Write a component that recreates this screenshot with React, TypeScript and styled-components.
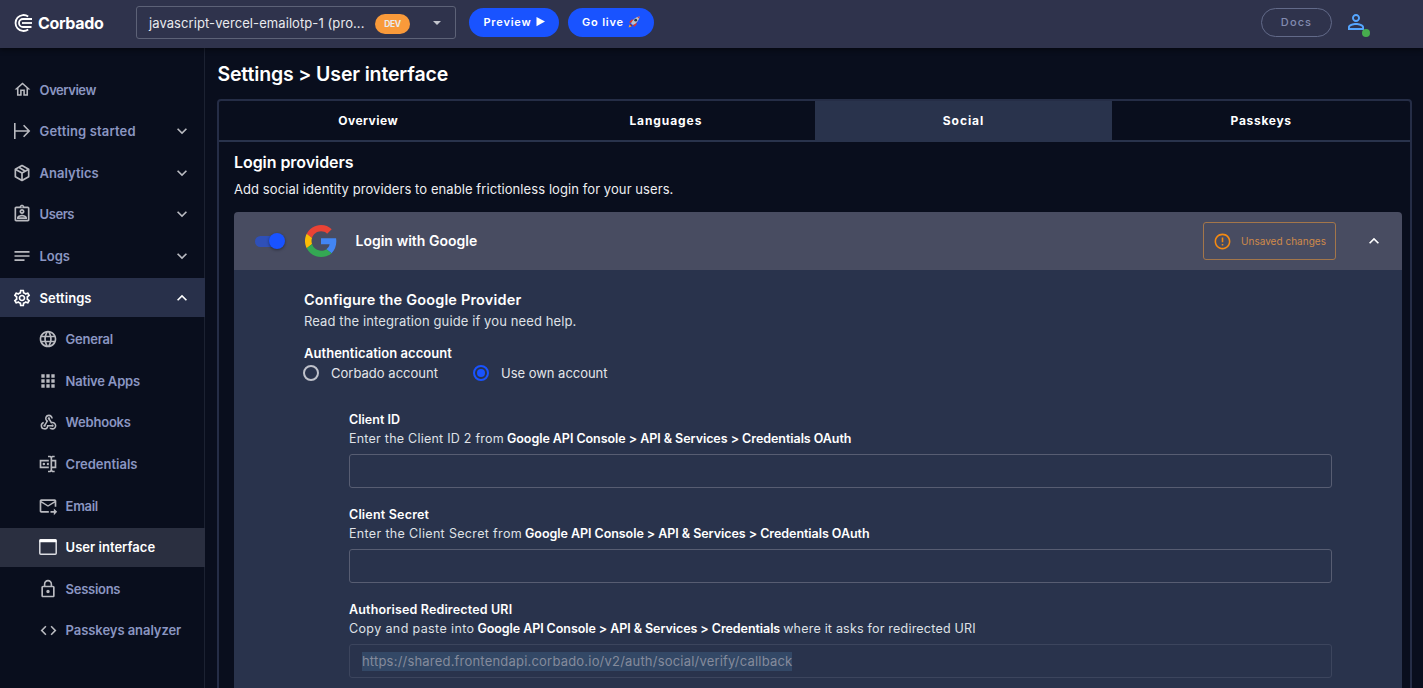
import React from "react";
import styled, { createGlobalStyle, css } from "styled-components";
import {
  MdApps,
  MdCode,
  MdErrorOutline,
  MdLanguage,
  MdLockOutline,
  MdNotes,
  MdOutlineAssignmentInd,
  MdOutlineForwardToInbox,
  MdOutlineSettings,
  MdPersonOutline,
  MdWebhook,
} from "react-icons/md";

const colors = {
  page: "#090e1d",
  bar: "#2f334c",
  slate: "#29334c",
  blue: "#1953ff",
  muted: "#8b96c2",
  icon: "#b9bac0",
  outline: "#575d72",
};

const GlobalStyle = createGlobalStyle`
  * { box-sizing: border-box; }
  body {
    margin: 0;
    background: ${colors.page};
    color: #fff;
    font-family: "Inter", "Liberation Sans", sans-serif;
    font-size: 13px;
    overflow: hidden;
  }
  svg { display: block; flex: none; }
`;

const Shell = styled.div`
  display: flex;
  flex-direction: column;
  height: 688px;
  overflow: hidden;
`;

/* letter spacing, in px */
type Spaced = { $ls?: number };
const spacing = css<Spaced>`
  letter-spacing: ${(p) => p.$ls ?? 0}px;
  white-space: nowrap;
`;

/* ---------- top bar ---------- */

const TopBar = styled.header`
  display: flex;
  flex: none;
  height: 48px;
  padding: 0 52px 0 14px;
  background: ${colors.bar};
  box-shadow: 0 2px 5px rgba(0, 0, 0, 0.45);
  z-index: 1;
`;

const Brand = styled.div`
  ${spacing}
  display: flex;
  align-items: center;
  gap: 5px;
  width: 122px;
  height: 45px;
  font-size: 16px;
  font-weight: 700;
`;

const ProjectSelect = styled.div`
  display: flex;
  align-items: center;
  width: 320px;
  height: 33px;
  margin-top: 6px;
  padding: 0 14px 0 12px;
  border: 1px solid #5d6277;
  border-radius: 3px;
  color: #e9eaee;
`;

const ProjectName = styled.span`
  ${spacing}
  width: 226px;
`;

const EnvBadge = styled.span`
  ${spacing}
  display: flex;
  align-items: center;
  justify-content: center;
  width: 35px;
  height: 20px;
  margin-top: 2px;
  border-radius: 10px;
  background: #f99a3a;
  font-size: 8.5px;
  font-weight: 700;
`;

const Caret = styled.span`
  margin-left: auto;
  border: 4px solid transparent;
  border-top-color: #c3c5cd;
  border-bottom-width: 0;
`;

const PillButton = styled.button<Spaced & { $width: number; $outlined?: boolean }>`
  ${spacing}
  display: flex;
  align-items: center;
  justify-content: center;
  gap: 4px;
  width: ${(p) => p.$width}px;
  height: 29px;
  margin-top: 8px;
  padding: 0 0 1px;
  border: ${(p) => (p.$outlined ? "1px solid #626a89" : "0")};
  border-radius: 15px;
  background: ${(p) => (p.$outlined ? "transparent" : colors.blue)};
  color: ${(p) => (p.$outlined ? "#828bb0" : "#fff")};
  font-family: inherit;
  font-size: 11px;
  font-weight: ${(p) => (p.$outlined ? 500 : 600)};
`;

const BarActions = styled.div`
  display: flex;
  gap: 9px;
  margin-left: 13px;
`;

const BarEnd = styled.div`
  display: flex;
  gap: 12px;
  margin-left: auto;
`;

const Avatar = styled.div`
  position: relative;
  width: 27px;
  height: 24px;
  margin-top: 10px;
  color: #55a6ff;
`;

const OnlineDot = styled.span`
  position: absolute;
  left: 18px;
  top: 19px;
  width: 8px;
  height: 8px;
  border-radius: 50%;
  background: #47ad4e;
`;

/* ---------- sidebar ---------- */

const Body = styled.div`
  display: flex;
  flex: 1;
  min-height: 0;
`;

const Sidebar = styled.nav`
  flex: none;
  width: 205px;
  padding-top: 22.4px;
  border-right: 1px solid #1c2232;
`;

type ItemState = { $state?: "open" | "current"; $nested?: boolean };

const NavItem = styled.div<ItemState>`
  display: flex;
  align-items: center;
  width: 205px;
  height: 38.6px;
  margin-bottom: 3px;
  padding: 0 13px 0 ${(p) => (p.$nested ? 38 : 12)}px;
  background: ${(p) =>
    p.$state === "open" ? "#28304a" : p.$state === "current" ? "#2a2f40" : "transparent"};
  color: ${(p) => (p.$state ? "#fff" : colors.muted)};
  font-weight: 600;
`;

const NavIcon = styled.span<ItemState>`
  display: flex;
  justify-content: center;
  width: 20px;
  color: ${(p) => (p.$state === "open" ? "#fff" : p.$state ? "#dadbe0" : colors.icon)};
`;

const NavLabel = styled.span<Spaced>`
  ${spacing}
  margin-left: 7.6px;
`;

const Chevron = styled.svg`
  width: 20px;
  height: 20px;
  margin-left: auto;
  fill: currentColor;
  color: ${(p) => p.color ?? "#fff"};
`;

/* ---------- settings panel ---------- */

const Main = styled.main`
  flex: 1;
  padding: 14px 11px 0 12.4px;
`;

const PageTitle = styled.h1`
  ${spacing}
  margin: 0 0 13px;
  font-size: 19.5px;
  font-weight: 600;
  line-height: 24px;
`;

const Panel = styled.section`
  height: 640px;
  border: 2px solid #252d46;
  border-radius: 4px 4px 0 0;
`;

const TabBar = styled.div`
  display: grid;
  grid-template-columns: repeat(4, 1fr);
  height: 41px;
  border-bottom: 2px solid ${colors.slate};
`;

const Tab = styled.div<Spaced & { $active?: boolean }>`
  ${spacing}
  display: flex;
  align-items: center;
  justify-content: center;
  font-size: 12px;
  font-weight: 700;
  background: ${(p) => (p.$active ? colors.slate : "transparent")};
`;

const PanelContent = styled.div`
  padding: 10px 8px 0 14.6px;
`;

const SectionTitle = styled.h2`
  ${spacing}
  margin: 0;
  font-size: 16px;
  font-weight: 600;
  line-height: 20px;
`;

const Paragraph = styled.p`
  ${spacing}
  margin: 8px 0 13px;
  line-height: 19px;
  color: #eeeff2;
`;

const Provider = styled.article`
  border-radius: 4px 4px 0 0;
  overflow: hidden;
`;

const ProviderHeader = styled.header`
  display: flex;
  align-items: center;
  height: 58px;
  padding: 0 18px 0 21px;
  background: #484c61;
`;

const Switch = styled.span`
  display: flex;
  align-items: center;
  justify-content: flex-end;
  width: 27px;
  height: 11px;
  border-radius: 6px;
  background: #2f50b8;
`;

const SwitchThumb = styled.span`
  flex: none;
  width: 16px;
  height: 16px;
  margin-right: -3px;
  border-radius: 50%;
  background: ${colors.blue};
  box-shadow: 0 1px 3px rgba(0, 0, 0, 0.4);
`;

const GoogleMark = styled.svg`
  width: 32px;
  height: 32px;
  margin: 0 18.500px 0 23px;
`;

const ProviderName = styled.h3`
  ${spacing}
  margin: 0 0 1px;
  font-size: 14px;
  font-weight: 600;
`;

const UnsavedNotice = styled.div`
  ${spacing}
  display: flex;
  align-items: center;
  gap: 9px;
  width: 133px;
  height: 38px;
  margin: 0 28px 0 auto;
  padding-left: 9px;
  border: 1px solid #a3764a;
  border-radius: 3px;
  color: #cf8a4a;
  font-size: 10px;
  svg { color: #f48a12; }
`;

const CollapseButton = styled.span`
  display: flex;
`;

const ProviderBody = styled.div`
  height: 480px;
  padding: 20px 70px 0;
  background: ${colors.slate};
`;

const ConfigTitle = styled.h4`
  ${spacing}
  margin: 0;
  font-size: 14.5px;
  font-weight: 600;
  line-height: 20px;
`;

const Hint = styled.p`
  ${spacing}
  margin: 2px 0 13px;
  line-height: 19px;
  color: #dfe1e6;
`;

const GroupLabel = styled.div`
  ${spacing}
  font-weight: 600;
  line-height: 19px;
`;

const RadioGroup = styled.div`
  display: flex;
  gap: 35px;
  margin-left: -1px;
`;

const RadioOption = styled.label<Spaced>`
  ${spacing}
  display: flex;
  align-items: center;
  gap: 12px;
  height: 20px;
  color: #e4e6ea;
`;

const RadioMark = styled.span<{ $checked?: boolean }>`
  width: 16px;
  height: 16px;
  border: 2px solid ${(p) => (p.$checked ? colors.blue : "#bfc2cb")};
  border-radius: 50%;
  background: ${(p) => (p.$checked ? colors.blue : "transparent")};
  background-clip: content-box;
  padding: 2px;
`;

const Fields = styled.div`
  display: flex;
  flex-direction: column;
  padding: 27px 0 0 45px;
`;

const Field = styled.div`
  height: 95.2px;
  font-size: 12.5px;
`;

const FieldLabel = styled.div`
  ${spacing}
  font-weight: 600;
  line-height: 19px;
`;

const FieldHelp = styled.div`
  display: flex;
  gap: 3px;
  line-height: 19px;
  color: #dfe1e6;
`;

const HelpText = styled.span`
  ${spacing}
`;

const HelpPath = styled.strong`
  ${spacing}
  color: #fff;
  font-weight: 600;
`;

const FieldBox = styled.div<{ $disabled?: boolean }>`
  display: flex;
  align-items: center;
  height: 34px;
  margin-top: 6px;
  padding: 0 12px;
  border: 1px solid ${(p) => (p.$disabled ? "#3c455d" : colors.outline)};
  border-radius: 3px;
`;

const SelectedText = styled.span`
  ${spacing}
  background: #334866;
  color: #858b9c;
  font-size: 13px;
  line-height: 19px;
`;

/* ---------- drawings ---------- */

const PathIcon = ({ d, size }: { d: string; size: number }) => (
  <svg width={size} height={size} viewBox="0 0 24 24" fill="currentColor">
    <path d={d} />
  </svg>
);

const Logo = () => (
  <svg width="19" height="18" viewBox="0 0 19 18" fill="none" stroke="#fff" strokeWidth="1.8">
    <path d="M14.200 2.500A8 8 0 1 0 14.200 15.500" />
    <path d="M18 5H9a4 4 0 0 0 0 8h8.500" />
    <path d="M18 9H8" />
  </svg>
);

const HomeIcon = () => (
  <PathIcon size={19} d="M12 5.69L17 10.19V18H15V12H9V18H7V10.19L12 5.69M12 3L2 12H5V20H11V14H13V20H19V12H22" />
);

const StartIcon = () => (
  <svg width="20" height="20" viewBox="0 0 20 20" fill="none" stroke="currentColor" strokeWidth="1.6">
    <path d="M2.800 2v16M3 10h14M11.600 4.200 17.200 10l-5.600 5.800" />
  </svg>
);

const PackageIcon = () => (
  <PathIcon
    size={20}
    d="M21,16.5C21,16.88 20.79,17.21 20.47,17.38L12.57,21.82C12.41,21.94 12.21,22 12,22C11.79,22 11.59,21.94 11.43,21.82L3.53,17.38C3.21,17.21 3,16.88 3,16.5V7.5C3,7.12 3.21,6.79 3.53,6.62L11.43,2.18C11.59,2.06 11.79,2 12,2C12.21,2 12.41,2.06 12.57,2.18L20.47,6.62C20.79,6.79 21,7.12 21,7.5V16.5M12,4.15L10.11,5.22L16,8.61L17.96,7.5L12,4.15M6.04,7.5L12,10.85L13.96,9.75L8.08,6.35L6.04,7.5M5,15.91L11,19.29V12.58L5,9.21V15.91M19,15.91V9.21L13,12.58V19.29L19,15.91Z"
  />
);

const CredentialIcon = () => (
  <PathIcon
    size={20}
    d="M17,7H22V17H17V19A1,1 0 0,0 18,20H20V22H17.5C16.95,22 16,21.55 16,21C16,21.55 15.05,22 14.5,22H12V20H14A1,1 0 0,0 15,19V5A1,1 0 0,0 14,4H12V2H14.5C15.05,2 16,2.45 16,3C16,2.45 16.95,2 17.5,2H20V4H18A1,1 0 0,0 17,5V7M2,7H13V9H4V15H13V17H2V7M20,15V9H17V15H20M8.5,12A1.5,1.5 0 0,0 7,10.5A1.5,1.5 0 0,0 5.5,12A1.5,1.5 0 0,0 7,13.5A1.5,1.5 0 0,0 8.5,12M13,10.89C12.39,10.33 11.44,10.38 10.88,11C10.32,11.6 10.37,12.55 11,13.11C11.55,13.63 12.43,13.63 13,13.11V10.89Z"
  />
);

const WindowIcon = () => (
  <svg width="18" height="16" viewBox="0 0 18 16" fill="none">
    <rect x="0.8" y="0.8" width="16.4" height="14.4" rx="1" stroke="#dcdde2" strokeWidth="1.5" />
    <path d="M0.5 1.2a1 1 0 0 1 1-1h15a1 1 0 0 1 1 1V3.2H0.5z" fill="#fff" />
  </svg>
);

const ChevronIcon = ({ up, color }: { up?: boolean; color?: string }) => (
  <Chevron viewBox="0 0 24 24" color={color}>
    <path
      d={
        up
          ? "M7.41 15.41 12 10.83l4.59 4.58L18 14l-6-6-6 6z"
          : "M7.41 8.59 12 13.17l4.59-4.58L18 10l-6 6-6-6z"
      }
    />
  </Chevron>
);

const PlayIcon = () => (
  <svg width="9" height="10" viewBox="0 0 9 10" fill="#fff">
    <path d="M0.5 0 9 4.6 0.5 9.2z" />
  </svg>
);

const RocketIcon = () => (
  <svg width="12" height="12" viewBox="0 0 12 12">
    <path d="M1 6.2 3.6 3.6 6 3.8 3.2 7zM5.2 9 8.4 6l.2 2.6L6 11z" fill="#e0352b" />
    <path d="M3 7.2C4.5 3.8 7.5 1 11.6.4 11 4.5 8.4 7.5 4.9 9.1z" fill="#b9c3cd" />
    <path d="M9.3.9 11.6.4 11.1 2.700z" fill="#d6453b" />
    <circle cx="7.7" cy="4.2" r="1.4" fill="#26384d" />
    <path d="M.6 11.4 1.6 8.600l1.600.3.2 1.500z" fill="#f6a531" />
    <path d="M2.500 7.800 4.300 9.600 3.400 10.400 1.800 8.700z" fill="#8e2f35" />
  </svg>
);

const GoogleIcon = () => (
  <GoogleMark viewBox="0 0 48 48">
    <path fill="#EA4335" d="M24 9.5c3.54 0 6.71 1.22 9.21 3.6l6.85-6.85C35.9 2.38 30.47 0 24 0 14.62 0 6.51 5.38 2.56 13.22l7.98 6.19C12.43 13.72 17.74 9.5 24 9.5z" />
    <path fill="#4285F4" d="M46.98 24.55c0-1.57-.15-3.09-.38-4.55H24v9.02h12.94c-.58 2.96-2.26 5.48-4.78 7.18l7.73 6c4.51-4.18 7.09-10.36 7.09-17.65z" />
    <path fill="#FBBC05" d="M10.53 28.59c-.48-1.45-.76-2.99-.76-4.59s.27-3.14.76-4.59l-7.98-6.19C.92 16.46 0 20.12 0 24c0 3.88.92 7.54 2.56 10.78l7.97-6.19z" />
    <path fill="#34A853" d="M24 48c6.48 0 11.93-2.13 15.89-5.81l-7.73-6c-2.15 1.45-4.92 2.3-8.16 2.3-6.26 0-11.57-4.22-13.47-9.91l-7.98 6.19C6.51 42.62 14.62 48 24 48z" />
  </GoogleMark>
);

/* ---------- content ---------- */

type Entry = {
  label: string;
  ls: number;
  icon: React.ReactNode;
  expandable?: boolean;
  nested?: boolean;
  state?: "open" | "current";
};

const entries: Entry[] = [
  { label: "Overview", ls: -0.45, icon: <HomeIcon /> },
  { label: "Getting started", ls: 0.15, icon: <StartIcon />, expandable: true },
  { label: "Analytics", ls: 0.01, icon: <PackageIcon />, expandable: true },
  { label: "Users", ls: -0.45, icon: <MdOutlineAssignmentInd size={20} />, expandable: true },
  { label: "Logs", ls: -0.1, icon: <MdNotes size={20} />, expandable: true },
  { label: "Settings", ls: 0.05, icon: <MdOutlineSettings size={20} />, expandable: true, state: "open" },
  { label: "General", ls: -0.25, icon: <MdLanguage size={20} />, nested: true },
  { label: "Native Apps", ls: -0.2, icon: <MdApps size={20} />, nested: true },
  { label: "Webhooks", ls: -0.2, icon: <MdWebhook size={19} />, nested: true },
  { label: "Credentials", ls: 0, icon: <CredentialIcon />, nested: true },
  { label: "Email", ls: -0.3, icon: <MdOutlineForwardToInbox size={20} />, nested: true },
  { label: "User interface", ls: 0.02, icon: <WindowIcon />, nested: true, state: "current" },
  { label: "Sessions", ls: -0.28, icon: <MdLockOutline size={20} />, nested: true },
  { label: "Passkeys analyzer", ls: -0.06, icon: <MdCode size={19} />, nested: true },
];

const tabs = [
  { label: "Overview", ls: 0.49 },
  { label: "Languages", ls: 0.91 },
  { label: "Social", ls: 0.95, active: true },
  { label: "Passkeys", ls: 0.7 },
];

export default function App() {
  return (
    <Shell>
      <GlobalStyle />
      <TopBar>
        <Brand $ls={-0.35}>
          <Logo />
          Corbado
        </Brand>
        <ProjectSelect>
          <ProjectName $ls={0.08}>javascript-vercel-emailotp-1 (pro...</ProjectName>
          <EnvBadge $ls={-0.4}>DEV</EnvBadge>
          <Caret />
        </ProjectSelect>
        <BarActions>
          <PillButton $width={90} $ls={0.82}>
            Preview <PlayIcon />
          </PillButton>
          <PillButton $width={86} $ls={0.8}>
            Go live <RocketIcon />
          </PillButton>
        </BarActions>
        <BarEnd>
          <PillButton $width={71} $ls={1.1} $outlined>
            Docs
          </PillButton>
          <Avatar>
            <MdPersonOutline size={24} />
            <OnlineDot />
          </Avatar>
        </BarEnd>
      </TopBar>
      <Body>
        <Sidebar>
          {entries.map((e) => (
            <NavItem key={e.label} $state={e.state} $nested={e.nested}>
              <NavIcon $state={e.state}>{e.icon}</NavIcon>
              <NavLabel $ls={e.ls}>{e.label}</NavLabel>
              {e.expandable && (
                <ChevronIcon up={e.state === "open"} color={e.state ? "#fff" : colors.icon} />
              )}
            </NavItem>
          ))}
        </Sidebar>
        <Main>
          <PageTitle $ls={-0.14}>Settings &gt; User interface</PageTitle>
          <Panel>
            <TabBar>
              {tabs.map((t) => (
                <Tab key={t.label} $ls={t.ls} $active={t.active}>
                  {t.label}
                </Tab>
              ))}
            </TabBar>
            <PanelContent>
              <SectionTitle $ls={-0.06}>Login providers</SectionTitle>
              <Paragraph $ls={0.08}>
                Add social identity providers to enable frictionless login for your users.
              </Paragraph>
              <Provider>
                <ProviderHeader>
                  <Switch>
                    <SwitchThumb />
                  </Switch>
                  <GoogleIcon />
                  <ProviderName>Login with Google</ProviderName>
                  <UnsavedNotice $ls={0.02}>
                    <MdErrorOutline size={19} />
                    Unsaved changes
                  </UnsavedNotice>
                  <CollapseButton>
                    <ChevronIcon up />
                  </CollapseButton>
                </ProviderHeader>
                <ProviderBody>
                  <ConfigTitle $ls={0.17}>Configure the Google Provider</ConfigTitle>
                  <Hint $ls={0.11}>Read the integration guide if you need help.</Hint>
                  <GroupLabel $ls={0.04}>Authentication account</GroupLabel>
                  <RadioGroup>
                    <RadioOption $ls={0.02}>
                      <RadioMark />
                      Corbado account
                    </RadioOption>
                    <RadioOption $ls={-0.03}>
                      <RadioMark $checked />
                      Use own account
                    </RadioOption>
                  </RadioGroup>
                  <Fields>
                    <Field>
                      <FieldLabel $ls={0.02}>Client ID</FieldLabel>
                      <FieldHelp>
                        <HelpText $ls={0.24}>Enter the Client ID 2 from</HelpText>
                        <HelpPath $ls={-0.05}>
                          Google API Console &gt; API &amp; Services &gt; Credentials OAuth
                        </HelpPath>
                      </FieldHelp>
                      <FieldBox />
                    </Field>
                    <Field>
                      <FieldLabel $ls={0.2}>Client Secret</FieldLabel>
                      <FieldHelp>
                        <HelpText $ls={0.34}>Enter the Client Secret from</HelpText>
                        <HelpPath $ls={-0.05}>
                          Google API Console &gt; API &amp; Services &gt; Credentials OAuth
                        </HelpPath>
                      </FieldHelp>
                      <FieldBox />
                    </Field>
                    <Field>
                      <FieldLabel $ls={0.16}>Authorised Redirected URI</FieldLabel>
                      <FieldHelp>
                        <HelpText $ls={0.38}>Copy and paste into</HelpText>
                        <HelpPath $ls={-0.07}>
                          Google API Console &gt; API &amp; Services &gt; Credentials
                        </HelpPath>
                        <HelpText $ls={0.21}>where it asks for redirected URI</HelpText>
                      </FieldHelp>
                      <FieldBox $disabled>
                        <SelectedText $ls={0.2}>
                          https://shared.frontendapi.corbado.io/v2/auth/social/verify/callback
                        </SelectedText>
                      </FieldBox>
                    </Field>
                  </Fields>
                </ProviderBody>
              </Provider>
            </PanelContent>
          </Panel>
        </Main>
      </Body>
    </Shell>
  );
}
